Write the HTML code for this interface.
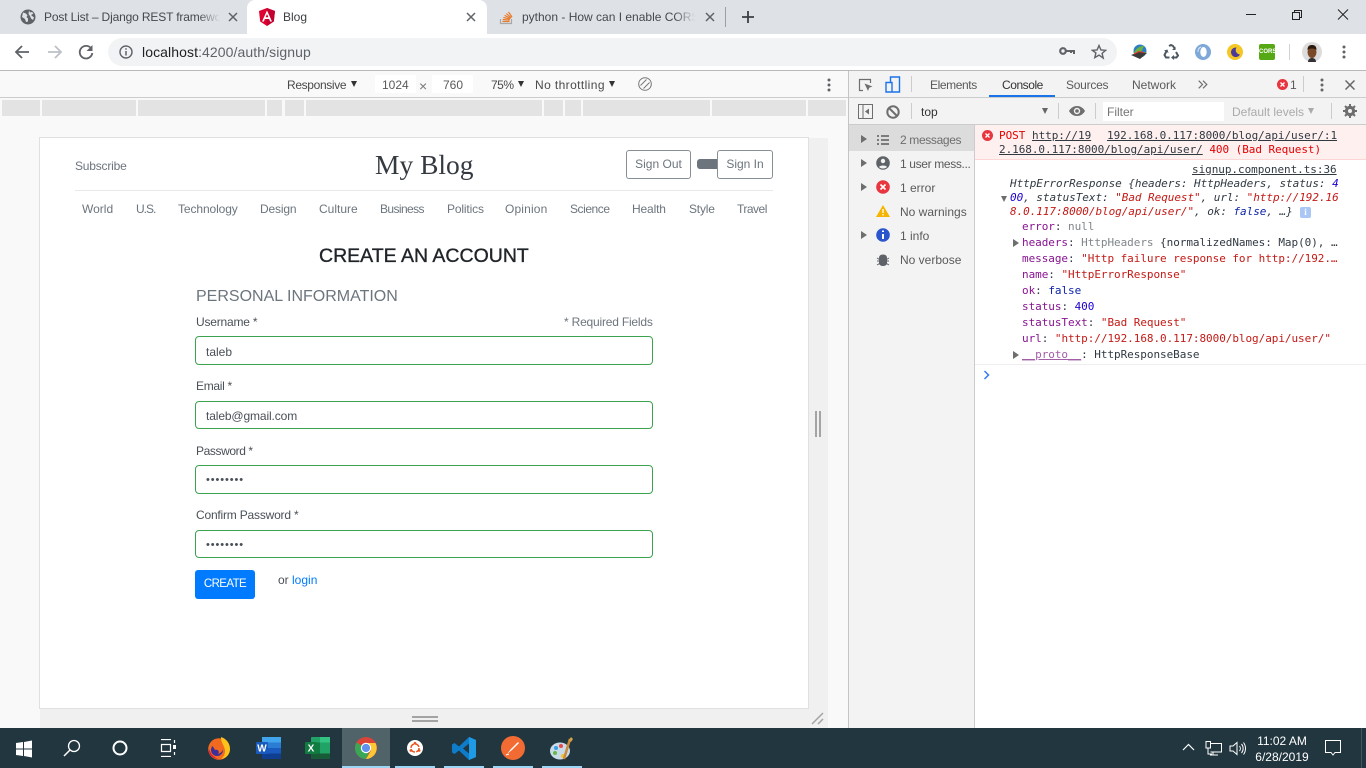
<!DOCTYPE html>
<html><head><meta charset="utf-8"><title>Blog</title>
<style>
*{box-sizing:border-box}
html,body{margin:0;padding:0;width:1366px;height:768px;overflow:hidden;background:#fff;font-family:"Liberation Sans",sans-serif}
.a,.t,svg{position:absolute}
.t{white-space:nowrap;line-height:16px;font-size:12px;color:#5a5a5a}
.m{font-family:"DejaVu Sans Mono","Liberation Mono",monospace;font-size:11px;color:#303942;line-height:14px;letter-spacing:-.05px}
.nav{color:#6c757d;font-size:12px;top:201px}
.lb{color:#495057;font-size:12px}
.inp{position:absolute;left:195px;width:458px;border:1px solid #3da24f;border-radius:4px;background:#fff;color:#495057;font-size:12px;line-height:16px;padding:6px 10px}
.rul{position:absolute;top:100px;height:16px;background:#e3e3e3}
.sep{position:absolute;width:1px;background:#ccc}
.pk{color:#881391}.st{color:#c41a16}.nu{color:#1c00cf}.gr{color:#80868b}.bl{color:#0d22aa}
.ul{text-decoration:underline}
.tu{position:absolute;top:766px;height:2px;background:#9dd6f5}
.tr{width:0;height:0;position:absolute;border-left:3.5px solid transparent;border-right:3.5px solid transparent;border-top:6px solid #333}
.rg{width:0;height:0;position:absolute;border-top:4px solid transparent;border-bottom:4px solid transparent;border-left:6px solid #6e6e6e}
</style></head><body>

<!-- browser chrome -->
<div class="a" style="left:0;top:0;width:1366px;height:34px;background:#dee1e6"></div>
<div class="a" style="left:247px;top:0;width:240px;height:34px;background:#fff;border-radius:8px 8px 0 0"></div>
<div class="a" style="left:0;top:34px;width:1366px;height:36px;background:#fff"></div>
<div class="a" style="left:108px;top:38px;width:1009px;height:28px;background:#f1f3f4;border-radius:14px"></div>
<div class="a" style="left:0;top:70px;width:1366px;height:1px;background:#b9b9b9"></div>

<!-- tab 1 -->
<svg style="left:20px;top:9px" width="16" height="16" viewBox="0 0 16 16"><circle cx="8" cy="8" r="7.5" fill="#5f6368"/><path d="M3 3.5l3 1 1.500 2-1 1.500 1.500 1.500v3l-2 .5-1-3-3-2zM9 1.500l1 2 2-.5 1.500 1.500-2.500 1.500 3 2.500-1 2.500-2-1.500-1-2.500-1.500-2z" fill="#dee1e6"/></svg>
<div class="t" style="left:44px;top:9px;width:176px;overflow:hidden;color:#45494f;font-size:12px;letter-spacing:-.15px;-webkit-mask-image:linear-gradient(90deg,#000 88%,transparent)">Post List – Django REST framework</div>
<svg style="left:228px;top:12px" width="10" height="10" viewBox="0 0 10 10"><path d="M1 1l8 8M9 1l-8 8" stroke="#5f6368" stroke-width="1.500"/></svg>
<!-- tab 2 -->
<svg style="left:259px;top:8px" width="16" height="18" viewBox="0 0 16 18"><path d="M8 0L0 3l1.200 10.500L8 18l6.800-4.500L16 3z" fill="#dd0031"/><path d="M8 0v18l6.800-4.500L16 3z" fill="#c3002f"/><path d="M8 2.500L3 13.500h1.900l1-2.500h4.200l1 2.500H13zM6.600 9.300L8 6l1.400 3.300z" fill="#fff"/></svg>
<div class="t" style="left:283px;top:9px;color:#3c4043;font-size:12px">Blog</div>
<svg style="left:466px;top:12px" width="10" height="10" viewBox="0 0 10 10"><path d="M1 1l8 8M9 1l-8 8" stroke="#5f6368" stroke-width="1.500"/></svg>
<!-- tab 3 -->
<svg style="left:499px;top:9px" width="16" height="16" viewBox="0 0 16 16"><path d="M1.500 10v4.500h11V10" fill="none" stroke="#a8a8a8" stroke-width="1.200"/><path d="M3.500 12.500h7M3.700 10.500l6.800.6M4.400 8.400l6.600 1.800M5.600 6.400l6 3M7.300 4.600l5 4.200M9.500 3l3.500 5" stroke="#e87b2c" stroke-width="1.200" fill="none"/></svg>
<div class="t" style="left:522px;top:9px;width:173px;overflow:hidden;color:#45494f;font-size:12px;-webkit-mask-image:linear-gradient(90deg,#000 88%,transparent)">python - How can I enable CORS on</div>
<svg style="left:705px;top:12px" width="10" height="10" viewBox="0 0 10 10"><path d="M1 1l8 8M9 1l-8 8" stroke="#5f6368" stroke-width="1.500"/></svg>
<div class="a" style="left:725px;top:7px;width:1px;height:20px;background:#9aa0a6"></div>
<svg style="left:741px;top:10px" width="14" height="14" viewBox="0 0 14 14"><path d="M7 1v12M1 7h12" stroke="#3c4043" stroke-width="1.800"/></svg>
<!-- window controls -->
<svg style="left:1245px;top:8px" width="112" height="14" viewBox="0 0 112 14"><path d="M1 6.500h10" stroke="#222" stroke-width="1"/><path d="M47.500 4.500h7v7h-7zM49.500 4.500v-2h7v7h-2" fill="none" stroke="#222"/><path d="M93 1.500l10 10M103 1.500l-10 10" stroke="#222" stroke-width="1"/></svg>

<!-- nav buttons -->
<svg style="left:14px;top:44px" width="16" height="16" viewBox="0 0 16 16"><path d="M15 8H2M8 2L2 8l6 6" fill="none" stroke="#5f6368" stroke-width="1.800"/></svg>
<svg style="left:47px;top:44px" width="16" height="16" viewBox="0 0 16 16"><path d="M1 8h13M8 2l6 6-6 6" fill="none" stroke="#bdc1c6" stroke-width="1.800"/></svg>
<svg style="left:78px;top:44px" width="16" height="16" viewBox="0 0 16 16"><path d="M13.500 5A6.300 6.300 0 1 0 14.300 9" fill="none" stroke="#5f6368" stroke-width="1.800"/><path d="M14.500 1v6h-6z" fill="#5f6368"/></svg>
<svg style="left:119px;top:45px" width="14" height="14" viewBox="0 0 14 14"><circle cx="7" cy="7" r="6" fill="none" stroke="#5f6368" stroke-width="1.400"/><path d="M7 6v4.500M7 3.300v1.500" stroke="#5f6368" stroke-width="1.500"/></svg>
<div class="t" style="left:142px;top:44px;font-size:14px;color:#202124;letter-spacing:.09px">localhost<span style="color:#5f6368">:4200/auth/signup</span></div>
<svg style="left:1059px;top:46px" width="16" height="12" viewBox="0 0 16 12"><circle cx="4" cy="5" r="2.800" fill="none" stroke="#5f6368" stroke-width="2.200"/><path d="M7 5h8v3M12 5v2" fill="none" stroke="#5f6368" stroke-width="2"/></svg>
<svg style="left:1091px;top:44px" width="16" height="16" viewBox="0 0 16 16"><path d="M8 1.500l1.900 4.400 4.800.4-3.600 3.100 1.100 4.700L8 11.100l-4.200 2.500 1.100-4.700L1.300 6.300l4.800-.4z" fill="none" stroke="#5f6368" stroke-width="1.400"/></svg>
<!-- extensions -->
<svg style="left:1131px;top:44px" width="16" height="16" viewBox="0 0 16 16"><circle cx="9" cy="7" r="6.500" fill="#2d7ec2"/><path d="M3 9c2-5 6-7 10-7l-3 6 5 0-2 4H3z" fill="#6db33f"/><path d="M0 11l8-3 8 1-7 6z" fill="#3a3a3a"/><path d="M3 10l5-2.500 5 1" stroke="#e33" fill="none"/></svg>
<svg style="left:1163px;top:44px" width="16" height="16" viewBox="0 0 16 16"><path d="M6 2l2-1 2 1 2 3M3.500 7L1.500 11l1.500 2.500h3.500M13 8l2 3.500-1.500 2H9" fill="none" stroke="#4e5862" stroke-width="2"/><path d="M12.500 2.500v3.500H9zM1 6.500l3.500-1 1 3.500zM11 11v5l-3-2.500z" fill="#4e5862"/></svg>
<svg style="left:1195px;top:44px" width="16" height="16" viewBox="0 0 16 16"><circle cx="8" cy="8" r="8" fill="#7ea8d8"/><ellipse cx="8.500" cy="8" rx="3.200" ry="5" fill="#fff"/><path d="M3 8a5 5 0 0 1 3-5" stroke="#dce9f6" fill="none"/></svg>
<svg style="left:1227px;top:44px" width="16" height="16" viewBox="0 0 16 16"><circle cx="8" cy="8" r="8" fill="#f4c724"/><path d="M9.500 3.500a4.800 4.800 0 1 0 3.500 7A4.500 4.500 0 0 1 9.500 3.500z" fill="#4a3a9a"/></svg>
<div class="a" style="left:1259px;top:44px;width:16px;height:16px;background:#56a814;border-radius:2px;color:#fff;font:bold 6px/16px 'Liberation Sans',sans-serif;text-align:center">CORS</div>
<div class="a" style="left:1289px;top:44px;width:1px;height:16px;background:#d0d3d6"></div>
<svg style="left:1302px;top:42px" width="20" height="20" viewBox="0 0 20 20"><circle cx="10" cy="10" r="10" fill="#dcdcdc"/><ellipse cx="10" cy="10" rx="4.500" ry="6" fill="#7a4a28"/><path d="M5.500 8c0-4 2-5 4.500-5s4.500 1 4.500 5c-2-2-7-2-9 0z" fill="#2b1a10"/><path d="M6 20c0-3 2-4 4-4s4 1 4 4z" fill="#333"/></svg>
<svg style="left:1342px;top:45px" width="4" height="14" viewBox="0 0 4 14"><circle cx="2" cy="2" r="1.500" fill="#5f6368"/><circle cx="2" cy="7" r="1.500" fill="#5f6368"/><circle cx="2" cy="12" r="1.500" fill="#5f6368"/></svg>

<!-- device toolbar -->
<div class="a" style="left:0;top:71px;width:849px;height:657px;background:#f9f9f9"></div>
<div class="a" style="left:0;top:97px;width:849px;height:1px;background:#ccc"></div>
<div class="t" style="left:287px;top:77px;color:#4a4a4a;letter-spacing:-.35px">Responsive</div>
<div class="tr" style="left:351px;top:81px"></div>
<div class="a" style="left:375px;top:75px;width:41px;height:18px;background:#fff"></div>
<div class="t" style="left:382px;top:77px;color:#5a5a5a">1024</div>
<div class="t" style="left:419px;top:78px;color:#777;font-size:14px">×</div>
<div class="a" style="left:432px;top:75px;width:41px;height:18px;background:#fff"></div>
<div class="t" style="left:443px;top:77px;color:#5a5a5a">760</div>
<div class="t" style="left:491px;top:77px;color:#4a4a4a;letter-spacing:-.5px">75%</div>
<div class="tr" style="left:518px;top:81px"></div>
<div class="t" style="left:535px;top:77px;color:#4a4a4a;letter-spacing:.4px">No throttling</div>
<div class="tr" style="left:609px;top:81px"></div>
<svg style="left:638px;top:77px" width="14" height="14" viewBox="0 0 14 14"><circle cx="7" cy="7" r="6.300" fill="none" stroke="#777"/><path d="M2.500 8.500L8.500 2.500M5.500 11.500l6-6" stroke="#777"/></svg>
<svg style="left:827px;top:78px" width="4" height="14" viewBox="0 0 4 14"><circle cx="2" cy="2" r="1.500" fill="#5f6368"/><circle cx="2" cy="7" r="1.500" fill="#5f6368"/><circle cx="2" cy="12" r="1.500" fill="#5f6368"/></svg>

<!-- media ruler -->
<div class="rul" style="left:2px;width:38px"></div><div class="rul" style="left:42px;width:94px"></div><div class="rul" style="left:138px;width:127px"></div><div class="rul" style="left:267px;width:15px"></div><div class="rul" style="left:285px;width:19px"></div><div class="rul" style="left:306px;width:236px"></div><div class="rul" style="left:544px;width:19px"></div><div class="rul" style="left:565px;width:16px"></div><div class="rul" style="left:583px;width:127px"></div><div class="rul" style="left:712px;width:94px"></div><div class="rul" style="left:808px;width:38px"></div>

<!-- emulated viewport -->
<div class="a" style="left:848px;top:71px;width:1px;height:657px;background:#c4c4c4"></div>
<div class="a" style="left:40px;top:138px;width:788px;height:590px;background:#f0f0f0"></div>
<div class="a" style="left:39px;top:137px;width:770px;height:572px;background:#fff;border:1px solid #e0e0e0"></div>
<div class="a" style="left:815px;top:411px;width:2px;height:26px;background:#a3a3a3"></div>
<div class="a" style="left:819px;top:411px;width:2px;height:26px;background:#a3a3a3"></div>
<div class="a" style="left:412px;top:716px;width:26px;height:2px;background:#a3a3a3"></div>
<div class="a" style="left:412px;top:720px;width:26px;height:2px;background:#a3a3a3"></div>
<svg style="left:811px;top:712px" width="14" height="13" viewBox="0 0 14 13"><path d="M1 12L12 1M7 12l5-5" stroke="#a3a3a3" stroke-width="1.500"/></svg>

<!-- page -->
<div class="t" style="left:75px;top:158px;color:#6c757d;font-size:12px;letter-spacing:-.2px">Subscribe</div>
<div class="t" style="left:375px;top:149px;color:#343a40;font:27.5px/32px 'Liberation Serif',serif">My Blog</div>
<div class="a" style="left:626px;top:150px;width:65px;height:29px;border:1px solid #868e96;border-radius:3px;color:#6c757d;font-size:12px;line-height:27px;text-align:center;background:#fff">Sign Out</div>
<div class="a" style="left:697px;top:159px;width:21px;height:10px;background:#6c757d;border-radius:3px 0 0 3px"></div>
<div class="a" style="left:717px;top:150px;width:56px;height:29px;border:1px solid #868e96;border-radius:3px;color:#6c757d;font-size:12px;line-height:27px;text-align:center;background:#fff">Sign In</div>
<div class="a" style="left:75px;top:190px;width:698px;height:1px;background:#e9e9e9"></div>
<div class="t nav" style="left:82px">World</div>
<div class="t nav" style="left:136px;letter-spacing:-1px">U.S.</div>
<div class="t nav" style="left:178px;letter-spacing:-.1px">Technology</div>
<div class="t nav" style="left:260px;letter-spacing:-.15px">Design</div>
<div class="t nav" style="left:319px">Culture</div>
<div class="t nav" style="left:380px;letter-spacing:-.6px">Business</div>
<div class="t nav" style="left:447px;letter-spacing:-.15px">Politics</div>
<div class="t nav" style="left:505px;letter-spacing:.15px">Opinion</div>
<div class="t nav" style="left:570px;letter-spacing:-.45px">Science</div>
<div class="t nav" style="left:632px;letter-spacing:-.15px">Health</div>
<div class="t nav" style="left:689px;letter-spacing:-.2px">Style</div>
<div class="t nav" style="left:737px;letter-spacing:-.5px">Travel</div>

<div class="t" style="left:319px;top:244px;font-size:19.500px;line-height:24px;color:#212529;-webkit-text-stroke:.35px #212529">CREATE AN ACCOUNT</div>
<div class="t" style="left:196px;top:287px;font-size:16px;line-height:20px;color:#6c757d">PERSONAL INFORMATION</div>
<div class="t lb" style="left:196px;top:314px;letter-spacing:-.2px">Username *</div>
<div class="t" style="left:564px;top:314px;color:#6c757d;letter-spacing:-.2px">* Required Fields</div>
<div class="inp" style="top:336px;height:29px;padding-top:7px">taleb</div>
<div class="t lb" style="left:196px;top:378px;letter-spacing:-.3px">Email *</div>
<div class="inp" style="top:401px;height:28px;letter-spacing:-.12px">taleb@gmail.com</div>
<div class="t lb" style="left:196px;top:443px;letter-spacing:-.4px">Password *</div>
<div class="inp" style="top:465px;height:29px;letter-spacing:.9px;font-size:11px">••••••••</div>
<div class="t lb" style="left:196px;top:507px;letter-spacing:-.2px">Confirm Password *</div>
<div class="inp" style="top:530px;height:28px;letter-spacing:.9px;font-size:11px">••••••••</div>
<div class="a" style="left:195px;top:570px;width:60px;height:29px;background:#007bff;border-radius:3px;color:#fff;font-size:11.500px;letter-spacing:-.6px;line-height:29px;text-align:center">CREATE</div>
<div class="t" style="left:278px;top:572px;color:#495057">or <span style="color:#007bff">login</span></div>

<!-- devtools -->
<div class="a" style="left:849px;top:71px;width:517px;height:54px;background:#f3f3f3"></div>
<div class="a" style="left:849px;top:97px;width:517px;height:1px;background:#ccc"></div>
<div class="a" style="left:849px;top:124px;width:517px;height:1px;background:#ccc"></div>
<svg style="left:858px;top:77px" width="16" height="16" viewBox="0 0 16 16"><path d="M12.500 6V2.500h-11v11H5" fill="none" stroke="#6e6e6e" stroke-width="1.200"/><path d="M6.500 6.500l8 3-3.300 1.200-1.200 3.300z" fill="#6e6e6e"/></svg>
<svg style="left:885px;top:76px" width="16" height="17" viewBox="0 0 16 17"><path d="M5.500 6V1h9v15h-9M1 6.500h6v9.500H1z" fill="none" stroke="#1a73e8" stroke-width="1.400"/></svg>
<div class="sep" style="left:911px;top:76px;height:16px"></div>
<div class="t" style="left:930px;top:77px;letter-spacing:-.4px">Elements</div>
<div class="t" style="left:1002px;top:77px;color:#333;letter-spacing:-.45px">Console</div>
<div class="a" style="left:989px;top:95px;width:66px;height:2px;background:#1a73e8"></div>
<div class="t" style="left:1066px;top:77px;letter-spacing:-.25px">Sources</div>
<div class="t" style="left:1132px;top:77px">Network</div>
<svg style="left:1198px;top:80px" width="10" height="9" viewBox="0 0 10 9"><path d="M.7.700L4.500 4.500.7 8.300M5 .7l3.800 3.800L5 8.300" fill="none" stroke="#6e6e6e" stroke-width="1.200"/></svg>
<svg style="left:1277px;top:79px" width="11" height="11" viewBox="0 0 11 11"><circle cx="5.500" cy="5.500" r="5.500" fill="#e8353f"/><path d="M3.500 3.500l4 4M7.500 3.500l-4 4" stroke="#fff" stroke-width="1.300"/></svg>
<div class="t" style="left:1290px;top:77px">1</div>
<div class="sep" style="left:1303px;top:76px;height:16px"></div>
<svg style="left:1320px;top:78px" width="4" height="14" viewBox="0 0 4 14"><circle cx="2" cy="2" r="1.500" fill="#666"/><circle cx="2" cy="7" r="1.500" fill="#666"/><circle cx="2" cy="12" r="1.500" fill="#666"/></svg>
<svg style="left:1345px;top:80px" width="10" height="10" viewBox="0 0 10 10"><path d="M.5.500l9 9M9.500.500l-9 9" stroke="#666" stroke-width="1.500"/></svg>

<svg style="left:858px;top:104px" width="15" height="15" viewBox="0 0 15 15"><path d="M.5.500h14v14H.5zM5 .5v14" fill="none" stroke="#6e6e6e"/><path d="M11 4.500v6L7 7.500z" fill="#6e6e6e"/></svg>
<svg style="left:886px;top:105px" width="14" height="14" viewBox="0 0 14 14"><circle cx="7" cy="7" r="5.700" fill="none" stroke="#6e6e6e" stroke-width="2"/><path d="M3 3l8 8" stroke="#6e6e6e" stroke-width="2"/></svg>
<div class="sep" style="left:911px;top:103px;height:16px"></div>
<div class="t" style="left:921px;top:104px;color:#333">top</div>
<div class="tr" style="left:1042px;top:108px;border-top-color:#666"></div>
<div class="sep" style="left:1058px;top:103px;height:16px"></div>
<svg style="left:1069px;top:105px" width="16" height="12" viewBox="0 0 16 12"><path d="M0 6c2-3.500 5-5 8-5s6 1.500 8 5c-2 3.500-5 5-8 5s-6-1.500-8-5z" fill="#6e6e6e"/><circle cx="8" cy="6" r="3.200" fill="#f3f3f3"/><circle cx="8" cy="6" r="1.800" fill="#6e6e6e"/></svg>
<div class="sep" style="left:1095px;top:103px;height:16px"></div>
<div class="a" style="left:1103px;top:102px;width:121px;height:19px;background:#fff"></div>
<div class="t" style="left:1107px;top:104px;color:#757575">Filter</div>
<div class="t" style="left:1232px;top:104px;color:#aaa">Default levels</div>
<div class="tr" style="left:1308px;top:108px;border-top-color:#aaa"></div>
<div class="sep" style="left:1331px;top:103px;height:16px"></div>
<svg style="left:1343px;top:104px" width="14" height="14" viewBox="0 0 14 14"><circle cx="7" cy="7" r="3.800" fill="none" stroke="#6e6e6e" stroke-width="2.800"/><path d="M7 0v14M0 7h14M2 2l10 10M12 2L2 12" stroke="#6e6e6e" stroke-width="2"/><circle cx="7" cy="7" r="2" fill="#f3f3f3"/></svg>

<!-- sidebar -->
<div class="a" style="left:849px;top:125px;width:126px;height:603px;background:#f3f3f3;border-right:1px solid #ccc"></div>
<div class="a" style="left:849px;top:125px;width:125px;height:26px;background:#dcdcdc"></div>
<div class="rg" style="left:861px;top:135px"></div><div class="rg" style="left:861px;top:159px"></div><div class="rg" style="left:861px;top:183px"></div><div class="rg" style="left:861px;top:231px"></div>
<svg style="left:876px;top:132px" width="14" height="136" viewBox="0 0 14 136">
<path d="M1 4h2M1 8h2M1 12h2M5 4h8M5 8h8M5 12h8" stroke="#6e6e6e" stroke-width="1.800"/>
<circle cx="7" cy="31" r="6.800" fill="#5f6368"/><circle cx="7" cy="29" r="2.200" fill="#f3f3f3"/><path d="M3 35c1-2 7-2 8 0-2 2-6 2-8 0z" fill="#f3f3f3"/>
<circle cx="7" cy="55" r="6.800" fill="#e8353f"/><path d="M4.500 52.500l5 5M9.500 52.500l-5 5" stroke="#fff" stroke-width="1.600"/>
<path d="M7 73l7 12H0z" fill="#f4b400"/><path d="M7 77v4M7 82v1.500" stroke="#fff" stroke-width="1.300"/>
<circle cx="7" cy="103" r="6.800" fill="#2a55cc"/><path d="M7 102v5M7 98.500v1.500" stroke="#fff" stroke-width="2"/>
<path transform="translate(0,4)" d="M3.500 122c0-2 1.500-3 3.500-3s3.500 1 3.500 3v5c0 1.500-1.500 2.500-3.500 2.500S3.500 128.500 3.500 127zM1 122l2.500 1.500M13 122l-2.500 1.500M1 125h2.500M13 125h-2.500M1 129l2.500-1.500M13 129l-2.500-1.500" fill="#5f6368" stroke="#5f6368"/>
</svg>
<div class="t" style="left:900px;top:132px;color:#6e6e6e;letter-spacing:-.35px">2 messages</div>
<div class="t" style="left:900px;top:156px;letter-spacing:-.35px">1 user mess...</div>
<div class="t" style="left:900px;top:180px">1 error</div>
<div class="t" style="left:900px;top:204px">No warnings</div>
<div class="t" style="left:900px;top:228px">1 info</div>
<div class="t" style="left:900px;top:252px">No verbose</div>

<!-- console -->
<div class="a" style="left:975px;top:125px;width:391px;height:35px;background:#fff0f0;border-bottom:1px solid #ffd6d6"></div>
<svg style="left:982px;top:130px" width="11" height="11" viewBox="0 0 11 11"><circle cx="5.500" cy="5.500" r="5.500" fill="#e8353f"/><path d="M3.500 3.500l4 4M7.500 3.500l-4 4" stroke="#fff" stroke-width="1.300"/></svg>
<div class="t m" style="left:999px;top:129px;color:#e60000">POST</div>
<div class="t m ul" style="left:1032px;top:129px">http://19</div>
<div class="t m ul" style="left:1107px;top:129px">192.168.0.117:8000/blog/api/user/:1</div>
<div class="t m" style="left:999px;top:143px"><span class="ul">2.168.0.117:8000/blog/api/user/</span> <span style="color:#e60000">400 (Bad Request)</span></div>
<div class="t m ul" style="left:1192px;top:163px">signup.component.ts:36</div>
<div class="t m" style="left:1010px;top:177px;font-style:italic">HttpErrorResponse {headers: HttpHeaders, status: <span class="nu">4</span></div>
<div class="t m" style="left:1010px;top:191px;font-style:italic"><span class="nu">00</span>, statusText: <span class="st">"Bad Request"</span>, url: <span class="st">"http://192.16</span></div>
<div class="t m" style="left:1010px;top:205px;font-style:italic"><span class="st">8.0.117:8000/blog/api/user/"</span>, ok: <span class="bl">false</span>, …}</div>
<div class="a" style="left:1300px;top:207px;width:11px;height:11px;background:#a9c6f5;border-radius:2px;color:#fff;font:bold 9px/11px 'Liberation Serif',serif;text-align:center">i</div>
<div class="tr" style="left:1001px;top:196px;border-top-color:#6e6e6e"></div>
<div class="t m" style="left:1022px;top:220px"><span class="pk">error</span>: <span class="gr">null</span></div>
<div class="rg" style="left:1013px;top:239px"></div>
<div class="t m" style="left:1022px;top:236px"><span class="pk">headers</span>: <span class="gr">HttpHeaders</span> {normalizedNames: Map(0), …</div>
<div class="t m" style="left:1022px;top:252px"><span class="pk">message</span>: <span class="st">"Http failure response for http://192.…</span></div>
<div class="t m" style="left:1022px;top:268px"><span class="pk">name</span>: <span class="st">"HttpErrorResponse"</span></div>
<div class="t m" style="left:1022px;top:284px"><span class="pk">ok</span>: <span class="bl">false</span></div>
<div class="t m" style="left:1022px;top:300px"><span class="pk">status</span>: <span class="nu">400</span></div>
<div class="t m" style="left:1022px;top:316px"><span class="pk">statusText</span>: <span class="st">"Bad Request"</span></div>
<div class="t m" style="left:1022px;top:332px"><span class="pk">url</span>: <span class="st">"http://192.168.0.117:8000/blog/api/user/"</span></div>
<div class="rg" style="left:1013px;top:351px"></div>
<div class="t m" style="left:1022px;top:348px"><span class="ul" style="color:#a35ea8">__proto__</span>: HttpResponseBase</div>
<div class="a" style="left:975px;top:364px;width:391px;height:1px;background:#eee"></div>
<svg style="left:983px;top:370px" width="8" height="10" viewBox="0 0 8 10"><path d="M1.500 1l4 4-4 4" fill="none" stroke="#367cf1" stroke-width="1.500"/></svg>

<!-- taskbar -->
<div class="a" style="left:0;top:728px;width:1366px;height:40px;background:#22363f"></div>
<div class="a" style="left:342px;top:728px;width:48px;height:40px;background:#4f6369"></div>
<div class="tu" style="left:342px;width:48px"></div><div class="tu" style="left:395px;width:40px"></div><div class="tu" style="left:444px;width:40px"></div><div class="tu" style="left:493px;width:40px"></div><div class="tu" style="left:542px;width:40px"></div>
<svg style="left:16px;top:740px" width="16" height="18" viewBox="0 0 16 18"><path d="M0 3l7-1v6.500H0zM8 2l8-1.500v8H8zM0 9.500h7V16l-7-1zM8 9.500h8v8L8 16z" fill="#fff"/></svg>
<svg style="left:63px;top:739px" width="18" height="18" viewBox="0 0 18 18"><circle cx="11" cy="7" r="5.500" fill="none" stroke="#fff" stroke-width="1.300"/><path d="M7 11l-6 6" stroke="#fff" stroke-width="1.500"/></svg>
<svg style="left:112px;top:740px" width="16" height="16" viewBox="0 0 16 16"><circle cx="8" cy="8" r="6.500" fill="none" stroke="#fff" stroke-width="2"/></svg>
<svg style="left:160px;top:739px" width="16" height="18" viewBox="0 0 16 18"><path d="M1 .5h10M1 17.500h10M1.500 5.500h9v7h-9zM14.500 1v3M14.500 13v3" fill="none" stroke="#fff" stroke-width="1.200"/><rect x="13" y="6" width="3" height="4" fill="#fff"/></svg>
<svg style="left:208px;top:736px" width="22" height="24" viewBox="0 0 22 24"><circle cx="11" cy="13" r="10.800" fill="#f26a1f"/><path d="M13 1c6 2 9 7 9 12a10 10 0 0 1-9 10c4-3 5-8 3-12-1-3-3-5-3-10z" fill="#ffc21a"/><circle cx="9" cy="14" r="6" fill="#3d2f97"/><path d="M4 9c3-4 6-5 9-4-2 2 1 3 2 5 1 3-1 7-5 8 2-2 0-5-3-4-1-2-2-3-3-5z" fill="#f26a1f"/><path d="M1 13c-1 5 4 10 9 10-5-2-7-5-9-10z" fill="#e3153d"/></svg>
<svg style="left:256px;top:736px" width="25" height="24" viewBox="0 0 25 24"><rect x="6" y="1" width="19" height="22" rx="1" fill="#2b7cd3"/><rect x="6" y="1" width="19" height="5.500" fill="#41a5ee"/><rect x="6" y="12" width="19" height="5.500" fill="#185abd"/><rect x="6" y="17.500" width="19" height="5.500" fill="#103f91"/><rect y="6" width="12" height="12" rx="1" fill="#185abd"/><text x="6" y="15.500" text-anchor="middle" fill="#fff" font-family="Liberation Sans" font-weight="bold" font-size="10">W</text></svg>
<svg style="left:305px;top:736px" width="25" height="24" viewBox="0 0 25 24"><rect x="6" y="1" width="19" height="22" rx="1" fill="#21a366"/><rect x="15" y="1" width="10" height="5.500" fill="#33c481"/><rect x="6" y="6.500" width="9" height="5.500" fill="#107c41"/><rect x="6" y="17.500" width="19" height="5.500" fill="#185c37"/><rect x="6" y="12" width="9" height="5.500" fill="#107c41"/><rect y="6" width="12" height="12" rx="1" fill="#107c41"/><text x="6" y="15.500" text-anchor="middle" fill="#fff" font-family="Liberation Sans" font-weight="bold" font-size="10">X</text></svg>
<svg style="left:355px;top:737px" width="22" height="22" viewBox="0 0 22 22"><circle cx="11" cy="11" r="11" fill="#db4437"/><path d="M11 11L1.500 5.500A11 11 0 0 0 11 22l5-11z" fill="#3aa757"/><path d="M11 6h9.500A11 11 0 0 1 11 22l5-8.500z" fill="#fcc934"/><circle cx="11" cy="11" r="5.200" fill="#fff"/><circle cx="11" cy="11" r="4.100" fill="#6193ee"/></svg>
<svg style="left:407px;top:740px" width="16" height="16" viewBox="0 0 16 16"><circle cx="8" cy="8" r="8" fill="#fff"/><circle cx="8" cy="8" r="4" fill="none" stroke="#e95420" stroke-width="1.500" stroke-dasharray="5 1.300"/><circle cx="8" cy="3.200" r="1.300" fill="#e95420"/><circle cx="3.800" cy="10.500" r="1.300" fill="#e95420"/><circle cx="12.200" cy="10.500" r="1.300" fill="#e95420"/></svg>
<svg style="left:452px;top:737px" width="24" height="23" viewBox="0 0 24 23"><path d="M17 0l7 3v17l-7 3-10-9.500-4.500 3.500L0 15.500V7.500L2.500 6 7 9.500zM17 6.500L11 11.500l6 5z" fill="#0e7cc9" fill-rule="evenodd"/><path d="M17 0l7 3v17l-7 3z" fill="#1f9be6"/></svg>
<svg style="left:501px;top:736px" width="24" height="24" viewBox="0 0 24 24"><circle cx="12" cy="12" r="12" fill="#f26b33"/><path d="M6 18l4-5 7-7 1 1-7 7z" fill="#fff"/><path d="M5 19l3-1" stroke="#fff"/></svg>
<svg style="left:550px;top:736px" width="24" height="25" viewBox="0 0 24 25"><ellipse cx="10" cy="15" rx="10" ry="8.500" fill="#c9dbe8"/><circle cx="6" cy="12" r="2" fill="#3aa0e0"/><circle cx="11" cy="10" r="2" fill="#e84a4a"/><circle cx="5" cy="17" r="2" fill="#69b84a"/><circle cx="13" cy="20" r="2" fill="#f2c230"/><path d="M14 23L20 3" stroke="#c9893a" stroke-width="2.500"/><path d="M19 4l2-3 2 2-2 3z" fill="#d8a24a"/></svg>

<!-- tray -->
<svg style="left:1182px;top:743px" width="13" height="8" viewBox="0 0 13 8"><path d="M1 7l5.500-5.500L12 7" fill="none" stroke="#fff" stroke-width="1.200"/></svg>
<svg style="left:1205px;top:741px" width="17" height="15" viewBox="0 0 17 15"><path d="M5.500 2.500h11v8.500H5.500M1 .5h4.500V7H1zM3 7v6h4M8 11v3M5 14h8" fill="none" stroke="#fff"/></svg>
<svg style="left:1229px;top:741px" width="17" height="15" viewBox="0 0 17 15"><path d="M1 5h3l4-3.500v12L4 10H1z" fill="none" stroke="#fff"/><path d="M10.500 5a4 4 0 0 1 0 5M12.500 3a7 7 0 0 1 0 9M14.500 1.500a10 10 0 0 1 0 12" fill="none" stroke="#fff"/></svg>
<div class="t" style="left:1250px;top:733px;width:64px;text-align:center;color:#fff">11:02 AM</div>
<div class="t" style="left:1250px;top:749px;width:64px;text-align:center;color:#fff">6/28/2019</div>
<svg style="left:1325px;top:740px" width="16" height="16" viewBox="0 0 16 16"><path d="M.5.500h15v12H10l-2 2.500-2-2.500H.5z" fill="none" stroke="#fff"/></svg>
<div class="a" style="left:1361px;top:728px;width:1px;height:40px;background:#44565e"></div>
</body></html>
